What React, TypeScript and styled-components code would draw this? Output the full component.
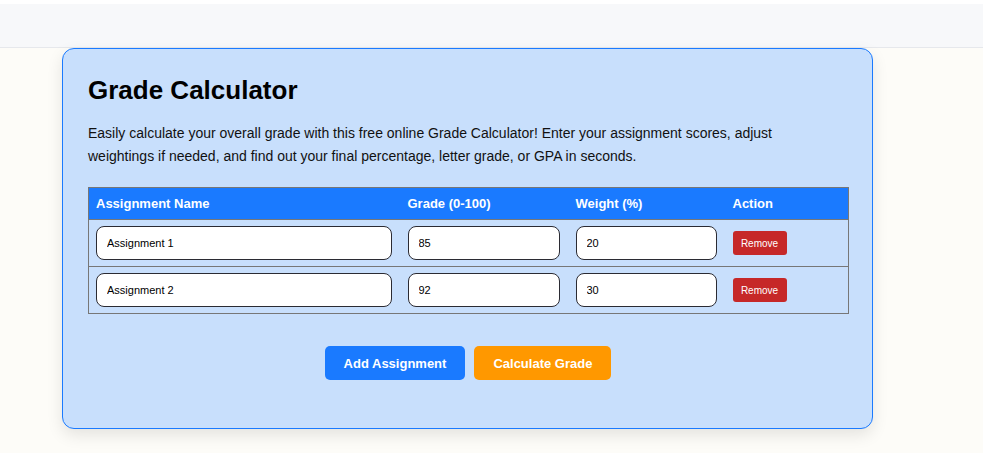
import React, { useState } from "react";
import styled, { createGlobalStyle } from "styled-components";

type Row = { name: string; grade: string; weight: string };

const GlobalStyle = createGlobalStyle`
  html, body {
    margin: 0;
    padding: 0;
    background: #fdfcf8;
    font-family: "Liberation Sans", Arial, sans-serif;
  }
`;

const Page = styled.div`
  padding-top: 4px;
  background: #ffffff;
`;

const TopBar = styled.header`
  height: 43px;
  background: #f7f8fa;
  border-bottom: 1px solid #e6e8ec;
`;

const Main = styled.main`
  background: #fdfcf8;
  padding: 0 0 24px 62px;
`;

const Card = styled.section`
  width: 811px;
  box-sizing: border-box;
  padding: 26px 24px 26px 25px;
  background: #c8dffc;
  border: 1px solid #1a7aff;
  border-radius: 12px;
  box-shadow: 0 6px 16px rgba(0, 0, 0, 0.1);
`;

const Title = styled.h1`
  margin: 0;
  font-size: 26px;
  line-height: 30px;
  font-weight: 700;
  color: #000;
`;

const Intro = styled.p`
  max-width: 740px;
  margin: 17px 0 20px;
  font-size: 14px;
  line-height: 22.5px;
  color: #111;
`;

const Table = styled.table`
  width: 760px;
  border-collapse: collapse;
  border: 1px solid #777;
  table-layout: fixed;
`;

const HeadCell = styled.th<{ $w: number }>`
  width: ${(p) => p.$w}px;
  box-sizing: border-box;
  height: 32px;
  padding: 0 7px 1px;
  background: #1a7aff;
  color: #fff;
  font-size: 13px;
  font-weight: 700;
  text-align: left;
  border-bottom: 1px solid #777;
`;

const BodyRow = styled.tr`
  border-bottom: 1px solid #777;
`;

const Cell = styled.td`
  height: 46px;
  padding: 0 9px 0 7px;
  vertical-align: middle;
`;

const Field = styled.input`
  display: block;
  width: 100%;
  height: 34px;
  box-sizing: border-box;
  padding: 0 10px;
  border: 1px solid #2b2b33;
  border-radius: 8px;
  background: #fff;
  font-family: "Liberation Sans", Arial, sans-serif;
  font-size: 11px;
  color: #000;
  outline: none;
`;

const RemoveButton = styled.button`
  width: 54px;
  height: 24px;
  padding: 0;
  border: none;
  border-radius: 3px;
  background: #c62828;
  color: #fff;
  font-family: "Liberation Sans", Arial, sans-serif;
  font-size: 10px;
  cursor: pointer;
`;

const Actions = styled.div`
  display: flex;
  justify-content: center;
  gap: 9px;
  margin-top: 32px;
  margin-bottom: 22px;
`;

const ActionButton = styled.button<{ $tone: "blue" | "orange" }>`
  height: 34px;
  padding: 0 19px;
  border: none;
  border-radius: 5px;
  background: ${(p) => (p.$tone === "blue" ? "#1a7aff" : "#ff9800")};
  color: #fff;
  font-family: "Liberation Sans", Arial, sans-serif;
  font-size: 13px;
  font-weight: 700;
  cursor: pointer;
`;

export default function App() {
  const [rows, setRows] = useState<Row[]>([
    { name: "Assignment 1", grade: "85", weight: "20" },
    { name: "Assignment 2", grade: "92", weight: "30" },
  ]);

  const update = (i: number, key: keyof Row, value: string) =>
    setRows(rows.map((r, j) => (j === i ? { ...r, [key]: value } : r)));

  return (
    <>
      <GlobalStyle />
      <Page>
        <TopBar />
        <Main>
          <Card>
            <Title>Grade Calculator</Title>
            <Intro>
              Easily calculate your overall grade with this free online Grade
              Calculator! Enter your assignment scores, adjust weightings if
              needed, and find out your final percentage, letter grade, or GPA
              in seconds.
            </Intro>
            <Table>
              <thead>
                <tr>
                  <HeadCell $w={312}>Assignment Name</HeadCell>
                  <HeadCell $w={168}>Grade (0-100)</HeadCell>
                  <HeadCell $w={157}>Weight (%)</HeadCell>
                  <HeadCell $w={123}>Action</HeadCell>
                </tr>
              </thead>
              <tbody>
                {rows.map((r, i) => (
                  <BodyRow key={i}>
                    <Cell>
                      <Field
                        value={r.name}
                        onChange={(e) => update(i, "name", e.target.value)}
                      />
                    </Cell>
                    <Cell>
                      <Field
                        value={r.grade}
                        onChange={(e) => update(i, "grade", e.target.value)}
                      />
                    </Cell>
                    <Cell>
                      <Field
                        value={r.weight}
                        onChange={(e) => update(i, "weight", e.target.value)}
                      />
                    </Cell>
                    <Cell>
                      <RemoveButton
                        onClick={() => setRows(rows.filter((_, j) => j !== i))}
                      >
                        Remove
                      </RemoveButton>
                    </Cell>
                  </BodyRow>
                ))}
              </tbody>
            </Table>
            <Actions>
              <ActionButton
                $tone="blue"
                onClick={() =>
                  setRows([
                    ...rows,
                    { name: `Assignment ${rows.length + 1}`, grade: "", weight: "" },
                  ])
                }
              >
                Add Assignment
              </ActionButton>
              <ActionButton $tone="orange">Calculate Grade</ActionButton>
            </Actions>
          </Card>
        </Main>
      </Page>
    </>
  );
}
